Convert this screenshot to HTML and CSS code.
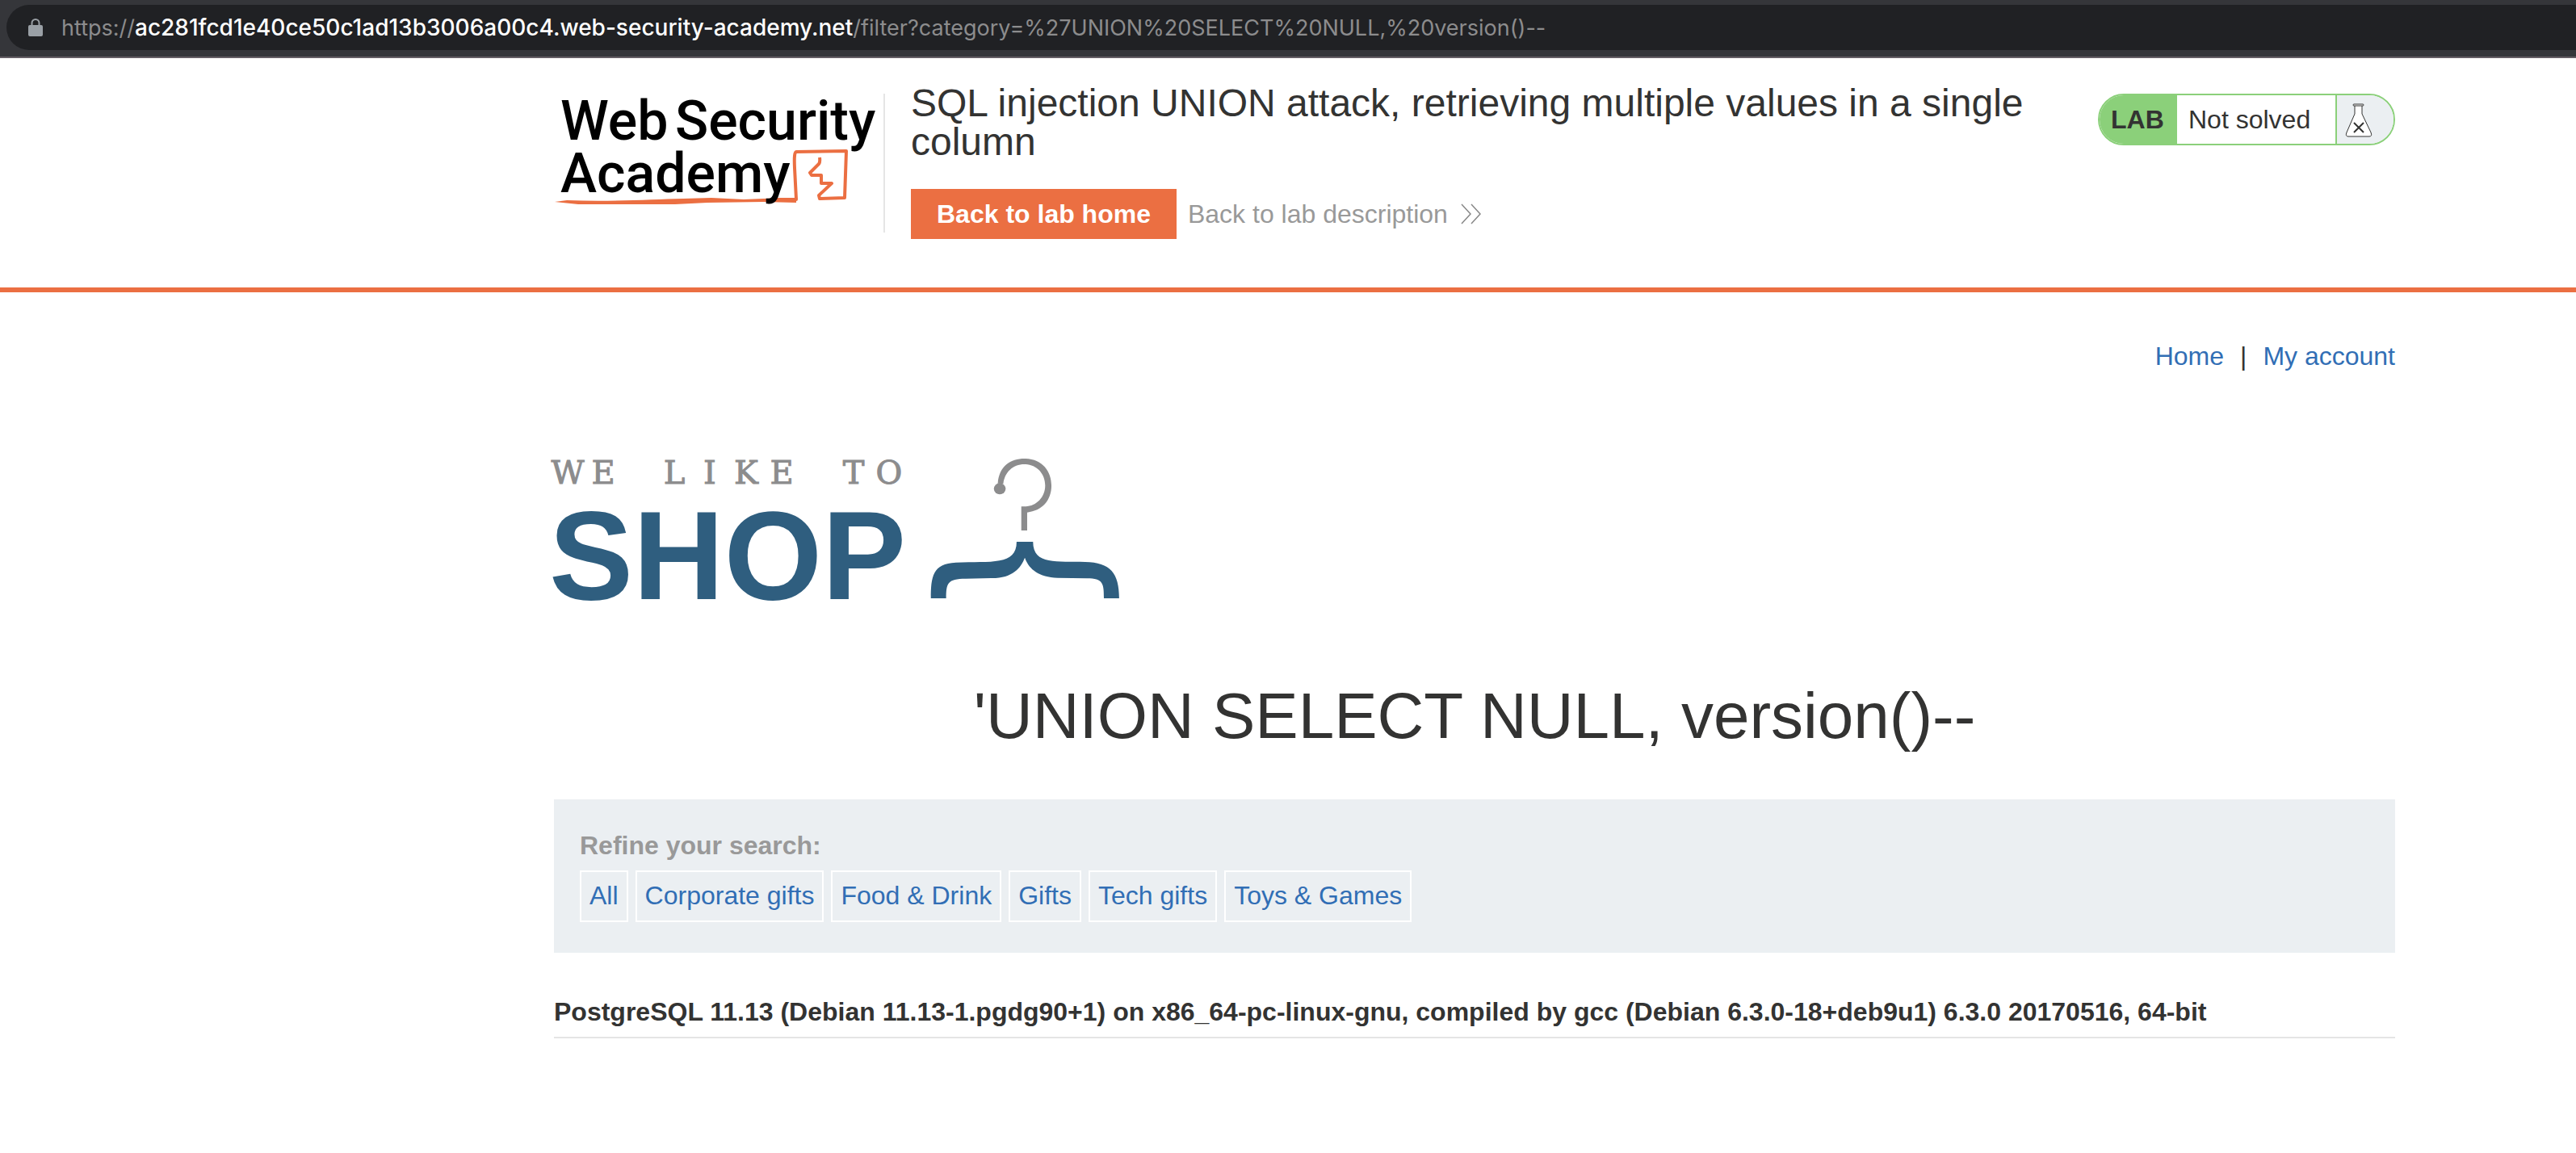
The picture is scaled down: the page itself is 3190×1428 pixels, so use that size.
FILE: index.html
```html
<!DOCTYPE html>
<html lang="en">
<head>
<meta charset="utf-8">
<title>SQL injection UNION attack, retrieving multiple values in a single column</title>
<link rel="stylesheet" href="styles.css">
</head>
<body>
<div class="browser-bar">
  <div class="address">
    <svg class="lock" width="18" height="22" viewBox="0 0 18 22" aria-hidden="true">
      <path d="M4.500 9V5.500a4.500 4.500 0 0 1 9 0V9" fill="none" stroke="#9aa0a6" stroke-width="2"/>
      <rect x="0" y="8" width="18" height="14" rx="2" fill="#9aa0a6"/>
    </svg>
    <span class="url">https://<span class="url-host">ac281fcd1e40ce50c1ad13b3006a00c4.web-security-academy.net</span>/filter?category=%27UNION%20SELECT%20NULL,%20version()--</span>
  </div>
</div>

<header class="lab-header">
  <div class="lab-header-inner">
    <a class="academy-logo" href="#" aria-label="Web Security Academy">
      <svg width="408" height="148" viewBox="0 0 408 148">
        <path d="M1 34L16 32C70 34 120 31 160 30L195 29L235 31L285 29L300 30L300 35L260 34L190 35L150 37L30 37Z" transform="translate(0 100)" fill="#eb6f42"/>
        <path d="M270 131L300 131L298 92Q297 72 300 72L362 71L360 129L329 130L328 126L344 111" fill="none" stroke="#eb6f42" stroke-width="4" stroke-linejoin="round" stroke-linecap="round"/>
        <path d="M329 79Q330 86 327 88L317 98L319 101H331V111L344 111" fill="none" stroke="#eb6f42" stroke-width="4" stroke-linejoin="round"/>
        <text class="academy-word" x="8" y="57">Web</text>
        <text class="academy-word" x="150" y="57">Security</text>
        <text class="academy-word" x="8" y="122">Academy</text>
      </svg>
    </a>
    <div class="lab-title">
      <h2>SQL injection UNION attack, retrieving multiple values in a single column</h2>
      <div class="lab-links">
        <a class="lab-home" href="#">Back to lab home</a>
        <a class="lab-description" href="#">Back to lab description
          <svg width="26" height="26" viewBox="0 0 26 26" aria-hidden="true"><path d="M1 1L12 13L1 25M13 1L24 13L13 25" fill="none" stroke="#888" stroke-width="1.500"/></svg>
        </a>
      </div>
    </div>
    <div class="lab-status">
      <span class="status-tag">LAB</span>
      <span class="status-text">Not solved</span>
      <span class="status-icon">
        <svg width="34" height="42" viewBox="0 0 34 42" aria-hidden="true">
          <path d="M12 3V13L2 36Q0 41 4 41H30Q34 41 32 36L21 13V3" fill="#fff" stroke="#333332" stroke-width="1"/>
          <rect x="10" y="1" width="13" height="2" rx="1" fill="#fff" stroke="#333332"/>
          <path d="M11 24L23 36M23 24L11 36" stroke="#333332" stroke-width="2"/>
        </svg>
      </span>
    </div>
  </div>
</header>

<main class="page">
  <nav class="top-links">
    <a href="#">Home</a><span>|</span><a href="#">My account</a>
  </nav>
  <div class="shop-logo">
    <svg width="704" height="190" viewBox="0 0 704 190" role="img" aria-label="We like to shop">
      <text class="shop-small" y="39" x="17 61 105 149 193 238 282 326 371 415">WE LIKE TO</text>
      <text class="shop-big" x="-6" y="182">SHOP</text>
      <g transform="translate(-16 -20) scale(.4847 .3333)">
        <path fill="#8c8c8d" d="M1167 176C1170 112 1200 84 1235 84C1280 84 1304 130 1304 184C1304 240 1280 278 1242 284V351H1227V262H1236C1265 262 1288 228 1288 184C1288 138 1265 105 1235 105C1205 105 1184 136 1181 178Z"/>
        <ellipse cx="1172" cy="196" rx="15" ry="21" fill="#8c8c8d"/>
        <path fill="#2f5e7f" d="M996 603C996 525 1000 473 1060 470C1150 465 1215 482 1215 393H1257C1257 482 1320 464 1390 468C1455 470 1477 510 1477 603H1438C1438 548 1436 529 1395 529L1320 527C1268 525 1245 490 1236 452C1226 490 1205 529 1150 528L1085 530C1038 530 1035 548 1035 603Z"/>
      </g>
    </svg>
  </div>
  <h1>'UNION SELECT NULL, version()--</h1>
  <section class="search-filters">
    <p class="filter-title">Refine your search:</p>
    <div class="filter-list">
      <a href="#">All</a>
      <a href="#">Corporate gifts</a>
      <a href="#">Food &amp; Drink</a>
      <a href="#">Gifts</a>
      <a href="#">Tech gifts</a>
      <a href="#">Toys &amp; Games</a>
    </div>
  </section>
  <table class="results">
    <tbody>
      <tr><th scope="row">PostgreSQL 11.13 (Debian 11.13-1.pgdg90+1) on x86_64-pc-linux-gnu, compiled by gcc (Debian 6.3.0-18+deb9u1) 6.3.0 20170516, 64-bit</th></tr>
    </tbody>
  </table>
</main>
</body>
</html>
```
FILE: styles.css
```css
* { box-sizing: border-box; }

body {
  margin: 0;
  background: #fff;
  color: #333332;
  font-family: "Liberation Sans", Arial, sans-serif;
  font-size: 32px;
  line-height: 36px;
}

a { color: #316eb5; text-decoration: none; }
svg { display: block; overflow: visible; }

.browser-bar {
  padding: 6px 0 8px 8px;
  background: #35363a;
  border-bottom: 2px solid #645d64;
}

.address {
  display: flex;
  align-items: center;
  gap: 23px;
  height: 56px;
  padding-left: 27px;
  border-radius: 28px 0 0 28px;
  background: #202124;
}

.url {
  font-family: Inter, sans-serif;
  font-size: 27px;
  color: #8c8c8d;
  white-space: nowrap;
}
.url-host {
  font-size: 28px;
  font-weight: 500;
  color: #fff;
}

.lab-header { border-bottom: 6px solid #eb6f42; }

.lab-header-inner {
  display: flex;
  align-items: flex-start;
  padding: 32px 224px 60px 686px;
}

.academy-logo {
  margin-top: 12px;
  padding-bottom: 24px;
  border-right: 2px solid #e5e5e5;
}
.academy-word {
  font-family: Roboto, sans-serif;
  font-size: 68px;
  font-weight: 500;
  fill: #000;
}

.lab-title {
  flex: 1;
  margin-left: 32px;
  padding-right: 92px;
}
.lab-title h2 {
  margin: 0;
  font-size: 48px;
  font-weight: 400;
  line-height: 48px;
}

.lab-links {
  display: flex;
  align-items: center;
  gap: 14px;
  margin-top: 34px;
}
.lab-home {
  padding: 13px 32px;
  background: #eb6f42;
  color: #fff;
  font-weight: 700;
}
.lab-description {
  display: flex;
  align-items: center;
  gap: 16px;
  color: #999;
}

.lab-status {
  display: flex;
  margin-top: 12px;
  width: 368px;
  height: 64px;
  border: 2px solid #8bd07a;
  border-radius: 32px;
  overflow: hidden;
  line-height: 60px;
}
.status-tag {
  width: 96px;
  padding-left: 14px;
  background: #8bd07a;
  font-weight: 700;
}
.status-text {
  flex: 1;
  padding-left: 14px;
}
.status-icon {
  width: 72px;
  padding: 10px;
  border-left: 2px solid #8bd07a;
  background: #ebeff2;
}

.page { padding: 61px 224px 80px 686px; }

.top-links {
  display: flex;
  justify-content: flex-end;
  gap: 20px;
}

.shop-logo { margin-top: 101px; }
.shop-small {
  font-family: "DejaVu Serif", serif;
  font-size: 40px;
  text-anchor: middle;
  fill: #8c8c8d;
  stroke: #8c8c8d;
  stroke-width: 1px;
}
.shop-big {
  font-family: "Liberation Sans", Arial, sans-serif;
  font-size: 156px;
  font-weight: 700;
  fill: #2f5e7f;
}

h1 {
  margin: 92px 0 58px;
  font-size: 80px;
  font-weight: 400;
  line-height: 90px;
  text-align: center;
}

.search-filters {
  padding: 39px 32px 38px;
  background: #ebeff2;
}
.filter-title {
  margin: 0;
  color: #999;
  font-weight: 700;
}
.filter-list {
  display: flex;
  gap: 9px;
  margin-top: 13px;
}
.filter-list a {
  padding: 11px 10px 13px;
  border: 2px solid #fff;
}

.results {
  width: 100%;
  margin-top: 55px;
  border-collapse: collapse;
}
.results th {
  padding: 0 0 13px;
  border-bottom: 2px solid #e5e5e5;
  text-align: left;
}
```
